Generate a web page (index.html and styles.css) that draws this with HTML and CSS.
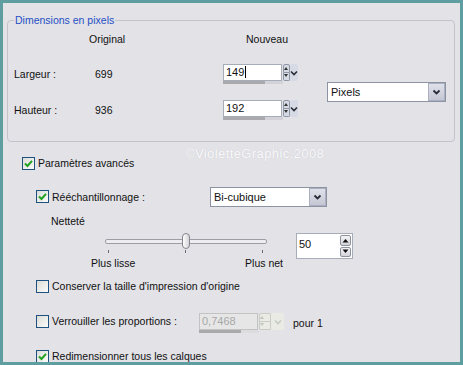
FILE: index.html
```html
<!DOCTYPE html>
<html>
	<head>
		<meta charset="utf-8"/>
		<title>Redimensionner</title>
		<link rel="stylesheet" href="styles.css">
	</head>
	<body>
		<div class="window">
			<fieldset class="group">
				<legend>Dimensions en pixels</legend>
				<div class="dims">
					<span class="hd hd-orig">Original</span>
					<span class="hd hd-new">Nouveau</span>

					<span class="lbl w-row">Largeur :</span>
					<span class="val w-row">699</span>
					<div class="spin w-row">
						<div class="spin-box">
							<div class="spin-field">149<span class="caret"></span></div>
							<div class="spin-btns"><span class="up"></span><span class="down"></span></div>
							<div class="spin-drop"><svg width="8" height="8" viewBox="0 0 8 8"><polyline points="1,2.5 4,5.5 7,2.5" fill="none" stroke="#2b2b38" stroke-width="1.6"/></svg></div>
						</div>
						<div class="spin-bar"></div>
					</div>
					<div class="combo units">
						<span class="combo-text">Pixels</span>
						<span class="combo-btn"><svg width="9" height="8" viewBox="0 0 9 8"><polyline points="1.5,2.5 4.5,5.5 7.5,2.5" fill="none" stroke="#2b2b38" stroke-width="1.8"/></svg></span>
					</div>

					<span class="lbl h-row">Hauteur :</span>
					<span class="val h-row">936</span>
					<div class="spin h-row">
						<div class="spin-box">
							<div class="spin-field">192</div>
							<div class="spin-btns"><span class="up"></span><span class="down"></span></div>
							<div class="spin-drop"><svg width="8" height="8" viewBox="0 0 8 8"><polyline points="1,2.5 4,5.5 7,2.5" fill="none" stroke="#2b2b38" stroke-width="1.6"/></svg></div>
						</div>
						<div class="spin-bar"></div>
					</div>
				</div>
			</fieldset>

			<div class="mark">©VioletteGraphic.2008</div>

			<div class="opt opt-adv">
				<span class="cb on"><svg width="9" height="9" viewBox="0 0 9 9"><path d="M1 4.5 L3.5 7 L8 1.8" fill="none" stroke="#21a121" stroke-width="2"/></svg></span>
				<span>Paramètres avancés</span>
			</div>

			<div class="opt opt-resample">
				<span class="cb on"><svg width="9" height="9" viewBox="0 0 9 9"><path d="M1 4.5 L3.5 7 L8 1.8" fill="none" stroke="#21a121" stroke-width="2"/></svg></span>
				<span class="resample-lbl">Rééchantillonnage :</span>
				<div class="combo method">
					<span class="combo-text">Bi-cubique</span>
					<span class="combo-btn"><svg width="9" height="8" viewBox="0 0 9 8"><polyline points="1.5,2.5 4.5,5.5 7.5,2.5" fill="none" stroke="#2b2b38" stroke-width="1.8"/></svg></span>
				</div>
			</div>

			<div class="sharp-lbl">Netteté</div>

			<div class="sharp-row">
				<div class="slider">
					<div class="track-area">
						<div class="track"></div>
						<div class="thumb"></div>
					</div>
					<div class="ticks"><i></i><i></i><i></i></div>
					<div class="slider-lbls"><span>Plus lisse</span><span>Plus net</span></div>
				</div>
				<div class="num">
					<span class="num-text">50</span>
					<div class="num-btns">
						<span><svg width="7" height="5" viewBox="0 0 7 5"><polygon points="0.5,4.5 3.5,1 6.5,4.5" fill="#111"/></svg></span>
						<span><svg width="7" height="5" viewBox="0 0 7 5"><polygon points="0.5,0.5 3.5,4 6.5,0.5" fill="#111"/></svg></span>
					</div>
				</div>
			</div>

			<div class="opt opt-keep">
				<span class="cb"></span>
				<span>Conserver la taille d'impression d'origine</span>
			</div>

			<div class="opt opt-lock">
				<span class="cb"></span>
				<span class="lock-lbl">Verrouiller les proportions :</span>
				<div class="spin spin-off">
					<div class="spin-box">
						<div class="spin-field">0,7468</div>
						<div class="spin-btns"><span class="up"></span><span class="down"></span></div>
						<div class="spin-drop"><svg width="8" height="8" viewBox="0 0 8 8"><polyline points="1,2.5 4,5.5 7,2.5" fill="none" stroke="#c6ccc0" stroke-width="1.6"/></svg></div>
					</div>
					<div class="spin-bar"></div>
				</div>
				<span class="ratio">pour 1</span>
			</div>

			<div class="opt opt-layers">
				<span class="cb on"><svg width="9" height="9" viewBox="0 0 9 9"><path d="M1 4.5 L3.5 7 L8 1.8" fill="none" stroke="#21a121" stroke-width="2"/></svg></span>
				<span>Redimensionner tous les calques</span>
			</div>
		</div>
	</body>
</html>
```

FILE: styles.css
```css
* {
	box-sizing: border-box;
}

body {
	margin: 0;
	font-family: 'Liberation Sans', Arial, sans-serif;
	font-size: 10.5px;
	color: #111;
}

.window {
	position: relative;
	width: 463px;
	height: 365px;
	border: 3px solid #5f9ea0;
	background: #e2e2e7;
	overflow: hidden;
}

/* group box */
.group {
	margin: 10px 5px 0 4px;
	padding: 0 6px 18px 6px;
	border: 1px solid #c3c3ca;
	border-radius: 4px;
}
legend {
	padding: 0 1px;
	line-height: 14px;
	color: #1f4fc4;
}

.dims {
	display: grid;
	grid-template-columns: 75px 134px 104px 1fr;
	grid-template-rows: 24px 46px 26px;
	align-items: center;
}
.hd-orig { grid-column: 2; grid-row: 1; }
.hd-new { grid-column: 3; grid-row: 1; padding-left: 23px; }
.w-row { grid-row: 2; }
.h-row { grid-row: 3; }
.lbl { grid-column: 1; }
.val { grid-column: 2; padding-left: 6px; }
.dims .spin { grid-column: 3; }

/* spin field with dropdown */
.spin {
	display: flex;
	flex-direction: column;
	width: 75px;
}
.spin-box {
	display: flex;
	height: 17px;
}
.spin-field {
	width: 60px;
	border: 1px solid #a7adb8;
	background: #fff;
	padding-left: 2px;
	line-height: 15px;
	font-size: 11px;
}
.caret {
	display: inline-block;
	width: 1px;
	height: 12px;
	margin-left: 1px;
	vertical-align: -2px;
	background: #000;
}
.spin-btns {
	display: flex;
	flex-direction: column;
	width: 7px;
	margin-left: 1px;
}
.spin-btns span {
	flex: 1;
	position: relative;
	border: 1px solid #8f97a6;
	background: #d6dae4;
}
.spin-btns .up { border-radius: 2px 2px 0 0; }
.spin-btns .down { border-radius: 0 0 2px 2px; border-top: none; }
.spin-btns .up::after,
.spin-btns .down::after {
	content: "";
	position: absolute;
	left: 0;
	top: 2px;
	border-left: 2.5px solid transparent;
	border-right: 2.5px solid transparent;
}
.spin-btns .up::after { border-bottom: 3px solid #333; }
.spin-btns .down::after { top: 1px; border-top: 3px solid #333; }
.spin-drop {
	width: 8px;
	display: flex;
	align-items: center;
	justify-content: center;
	background: #d6dae4;
	border-radius: 2px;
}
.spin-bar {
	width: 60px;
	height: 3px;
	background: linear-gradient(to right, #a9a9ae 70%, #d2d2d8 70%);
}

.spin-off .spin-field {
	background: #e6e6e6;
	color: #a8a8a8;
	border-color: #c3c3c3;
}
.spin-off .spin-btns span,
.spin-off .spin-drop {
	background: #e9ebe4;
	border-color: #c8ccc4;
}
.spin-off .spin-btns .up::after { border-bottom-color: #c0c4bb; }
.spin-off .spin-btns .down::after { border-top-color: #c0c4bb; }
.spin-off .spin-bar {
	background: linear-gradient(to right, #a9a9ae 70%, #dcdce0 70%);
}

/* combo boxes */
.combo {
	display: flex;
	height: 20px;
	border: 1px solid #8c94a3;
	background: #fff;
}
.combo-text {
	flex: 1;
	padding-left: 3px;
	line-height: 18px;
	font-size: 11px;
}
.combo-btn {
	width: 17px;
	display: flex;
	align-items: center;
	justify-content: center;
	background: linear-gradient(#dfe1ea, #c5c8d4);
	border: 1px solid #aab0bf;
}
.units {
	grid-column: 4;
	grid-row: 2 / span 2;
	align-self: start;
	margin-top: 31px;
	width: 119px;
}
.method {
	width: 117px;
}

/* watermark */
.mark {
	position: absolute;
	left: 182px;
	top: 143px;
	font-size: 13px;
	letter-spacing: 0.4px;
	color: rgba(255, 255, 255, 0.9);
	text-shadow: 0 0 1px rgba(120, 120, 130, 0.25);
}

/* option rows */
.opt {
	display: flex;
	align-items: center;
	padding-left: 33px;
}
.cb {
	width: 13px;
	height: 13px;
	margin-right: 3px;
	border: 1px solid #1c5180;
	background: linear-gradient(135deg, #dcdcd7, #fbfbfa);
	display: flex;
	align-items: center;
	justify-content: center;
	flex: none;
}
.opt-adv {
	height: 22px;
	margin-top: 10px;
	padding-left: 19px;
}
.opt-resample {
	height: 23px;
	margin-top: 11px;
}
.resample-lbl {
	width: 158px;
}
.sharp-lbl {
	height: 14px;
	line-height: 14px;
	margin-top: 6px;
	padding-left: 48px;
}

/* slider */
.sharp-row {
	display: flex;
	align-items: flex-start;
	margin-top: 5px;
}
.slider {
	width: 192px;
	margin-left: 88px;
}
.track-area {
	position: relative;
	height: 16px;
	padding-top: 6px;
}
.track {
	width: 162px;
	height: 5px;
	margin-left: 14px;
	border: 1px solid #9d9da6;
	border-radius: 2px;
	background: #eeeef0;
}
.thumb {
	position: absolute;
	left: 91px;
	top: 0;
	width: 8px;
	height: 16px;
	border: 1px solid #85858e;
	border-radius: 4px;
	background: linear-gradient(to right, #fdfdfd, #d5d5da);
}
.ticks {
	display: flex;
	gap: 76px;
	height: 3px;
	margin-top: 1px;
	padding-left: 17px;
}
.ticks i {
	width: 1px;
	background: #6c6c74;
}
.slider-lbls {
	display: flex;
	justify-content: space-between;
	margin-top: 4px;
	line-height: 13px;
}

.num {
	display: flex;
	width: 57px;
	height: 26px;
	margin-left: 13px;
	border: 1px solid #a7adb8;
	background: #fff;
}
.num-text {
	flex: 1;
	padding: 4px 0 0 2px;
	font-size: 11px;
}
.num-btns {
	display: flex;
	flex-direction: column;
	gap: 1px;
	width: 11px;
	margin: 1px 1px 1px 0;
}
.num-btns span {
	flex: 1;
	display: flex;
	align-items: center;
	justify-content: center;
	border: 1px solid #8d939e;
	border-radius: 2px;
	background: linear-gradient(#f4f4f6, #d3d4da);
}

.opt-keep {
	height: 14px;
	margin-top: 9px;
}
.opt-lock {
	height: 20px;
	margin-top: 20px;
	align-items: flex-start;
}
.opt-lock .cb {
	margin-top: 2px;
}
.lock-lbl {
	width: 147px;
	line-height: 17px;
}
.spin-off {
	width: 85px;
}
.spin-off .spin-field {
	width: 59px;
}
.spin-off .spin-btns {
	width: 12px;
}
.spin-off .spin-drop {
	width: 13px;
}
.ratio {
	margin-left: 9px;
	line-height: 20px;
}
.opt-layers {
	height: 14px;
	margin-top: 16px;
}
```
